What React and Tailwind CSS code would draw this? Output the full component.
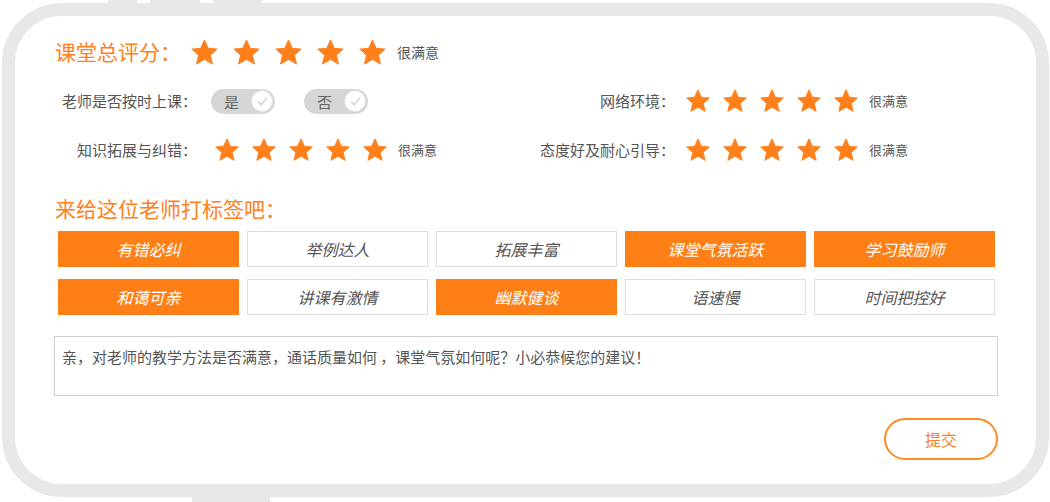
import React from "react";

const ORANGE = "#ff7f1a";

// ── Star icon ─────────────────────────────────────────────────────────────
function Star({ size }) {
  return (
    <svg width={size} height={size} viewBox="0 0 24 24">
      <path
        d="M12 1.6l3.1 6.9 7.4.7-5.6 5 1.7 7.4L12 17.7l-6.6 3.9 1.7-7.4-5.6-5 7.4-.7z"
        fill={ORANGE}
        stroke={ORANGE}
        strokeWidth="0.8"
        strokeLinejoin="round"
      />
    </svg>
  );
}

function Stars({ size, gap, note, noteClass }) {
  return (
    <div className="flex items-center">
      <div className={`flex items-center ${gap}`}>
        {[0, 1, 2, 3, 4].map((i) => (
          <Star key={i} size={size} />
        ))}
      </div>
      <span className={noteClass}>{note}</span>
    </div>
  );
}

// ── Yes / no pill ─────────────────────────────────────────────────────────
function Pill({ label }) {
  return (
    <div className="w-[64px] h-[25px] rounded-full bg-[#d6d6d6] flex items-center justify-between pl-[13px] pr-[2px]">
      <span className="text-[15px] text-[#666] leading-none">{label}</span>
      <span className="w-[22px] h-[22px] rounded-full bg-white border border-[#e2e2e2] flex items-center justify-center">
        <svg width="13" height="13" viewBox="0 0 14 14">
          <path d="M2.5 7.5l3 3 6-7" fill="none" stroke="#bdbdbd" strokeWidth="1.1" strokeLinecap="round" strokeLinejoin="round" />
        </svg>
      </span>
    </div>
  );
}

const TAGS = [
  { t: "有错必纠", on: true },
  { t: "举例达人", on: false },
  { t: "拓展丰富", on: false },
  { t: "课堂气氛活跃", on: true },
  { t: "学习鼓励师", on: true },
  { t: "和蔼可亲", on: true },
  { t: "讲课有激情", on: false },
  { t: "幽默健谈", on: true },
  { t: "语速慢", on: false },
  { t: "时间把控好", on: false },
];

export default function App() {
  return (
    <div
      className="w-[1050px] h-[502px] bg-white relative overflow-hidden"
      style={{ fontFamily: "'Noto Sans CJK SC', 'Noto Sans', sans-serif" }}
    >
      {/* little tab stubs around the frame */}
      <span className="absolute top-0 left-[108px] w-[29px] h-[4px] bg-[#e8e8e8]" />
      <span className="absolute top-0 left-[150px] w-[50px] h-[4px] bg-[#e8e8e8]" />
      <span className="absolute top-0 left-[213px] w-[49px] h-[4px] bg-[#e8e8e8]" />
      <span className="absolute bottom-0 left-[192px] w-[78px] h-[6px] bg-[#e8e8e8]" />

      <div className="absolute left-[2px] top-[3px] w-[1047px] h-[494px] border-[13px] border-[#e8e8e8] rounded-[60px] bg-white">
        <div className="pl-[40px] pr-[39px] flex flex-col">
          {/* overall score */}
          <div className="h-[36px] mt-[18px] flex items-center">
            <span className="text-[21px] text-[#ff7f1a] w-[135px]">课堂总评分：</span>
            <Stars size={29} gap="gap-[13px]" note="很满意" noteClass="ml-[10px] text-[14px] text-[#555]" />
          </div>

          {/* detail rows */}
          <div className="flex mt-[16px]">
            <div className="w-[445px] flex flex-col gap-[19px]">
              <div className="h-[30px] flex items-center">
                <span className="w-[142px] text-right text-[15px] text-[#555]">老师是否按时上课：</span>
                <div className="ml-[14px] flex items-center gap-[29px]">
                  <Pill label="是" />
                  <Pill label="否" />
                </div>
              </div>
              <div className="h-[30px] flex items-center">
                <span className="w-[142px] text-right text-[15px] text-[#555]">知识拓展与纠错：</span>
                <div className="ml-[17px]">
                  <Stars size={26} gap="gap-[11px]" note="很满意" noteClass="ml-[10px] text-[13px] text-[#555]" />
                </div>
              </div>
            </div>
            <div className="flex-1 flex flex-col gap-[19px]">
              <div className="h-[30px] flex items-center">
                <span className="w-[175px] text-right text-[15px] text-[#555]">网络环境：</span>
                <div className="ml-[10px]">
                  <Stars size={26} gap="gap-[11px]" note="很满意" noteClass="ml-[10px] text-[13px] text-[#555]" />
                </div>
              </div>
              <div className="h-[30px] flex items-center">
                <span className="w-[175px] text-right text-[15px] text-[#555]">态度好及耐心引导：</span>
                <div className="ml-[10px]">
                  <Stars size={26} gap="gap-[11px]" note="很满意" noteClass="ml-[10px] text-[13px] text-[#555]" />
                </div>
              </div>
            </div>
          </div>

          {/* tags */}
          <div className="h-[30px] mt-[29px] flex items-center text-[21px] text-[#ff7f1a]">来给这位老师打标签吧：</div>
          <div className="mt-[7px] ml-[3px] grid grid-cols-5 gap-x-[8px] gap-y-[12px] w-[937px]">
            {TAGS.map((tag) => (
              <div
                key={tag.t}
                className={`h-[36px] flex items-center justify-center italic text-[16px] ${
                  tag.on ? "bg-[#ff7f17] text-white" : "bg-white border border-[#dedede] text-[#555]"
                }`}
              >
                {tag.t}
              </div>
            ))}
          </div>

          {/* comment box */}
          <div className="mt-[21px] -ml-[1px] w-[944px] h-[60px] border border-[#d0d0d0] px-[7px] pt-[9px] text-[15px] text-[#555]">
            亲，对老师的教学方法是否满意，通话质量如何 ，课堂气氛如何呢？小必恭候您的建议！
          </div>

          <div className="mt-[22px] flex justify-end -mr-[1px]">
            <button className="w-[114px] h-[42px] rounded-full border-2 border-[#ff8a1f] text-[16px] text-[#ff7f1a] bg-white">
              提交
            </button>
          </div>
        </div>
      </div>
    </div>
  );
}
